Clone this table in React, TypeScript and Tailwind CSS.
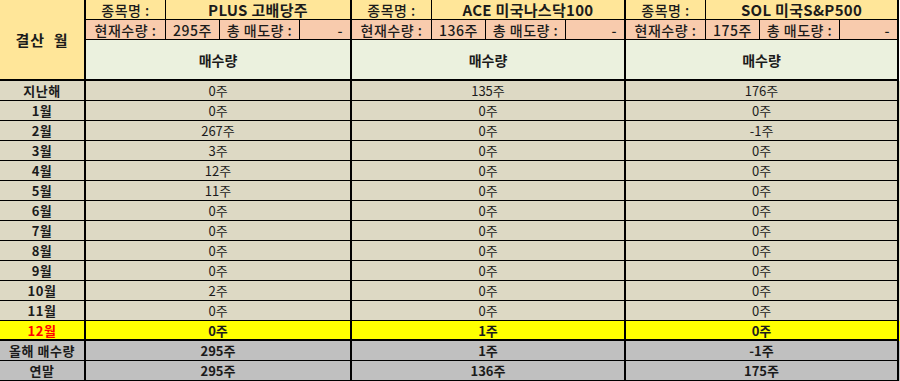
import React from "react"

type Stock = { name: string; qty: string; sold: string }

const stocks: Stock[] = [
  { name: "PLUS 고배당주", qty: "295주", sold: "-" },
  { name: "ACE 미국나스닥100", qty: "136주", sold: "-" },
  { name: "SOL 미국S&P500", qty: "175주", sold: "-" },
]

const blockW = ["w-[266px]", "w-[274px]", "w-[273px]"]

type Row = { label: string; values: number[]; kind?: "current" | "total" }

const rows: Row[] = [
  { label: "지난해", values: [0, 135, 176] },
  { label: "1월", values: [0, 0, 0] },
  { label: "2월", values: [267, 0, -1] },
  { label: "3월", values: [3, 0, 0] },
  { label: "4월", values: [12, 0, 0] },
  { label: "5월", values: [11, 0, 0] },
  { label: "6월", values: [0, 0, 0] },
  { label: "7월", values: [0, 0, 0] },
  { label: "8월", values: [0, 0, 0] },
  { label: "9월", values: [0, 0, 0] },
  { label: "10월", values: [2, 0, 0] },
  { label: "11월", values: [0, 0, 0] },
  { label: "12월", values: [0, 1, 0], kind: "current" },
  { label: "올해 매수량", values: [295, 1, -1], kind: "total" },
  { label: "연말", values: [295, 136, 175], kind: "total" },
]

function DataRow({ row, last }: { row: Row; last: boolean }) {
  const bg =
    row.kind === "current" ? "bg-[#ffff00]" : row.kind === "total" ? "bg-[#c0c0c0]" : "bg-[#ddd9c4]"
  const thick = row.kind === "current" || last
  const border = thick ? "border-b-2" : "border-b"
  const h = last ? "h-[21px]" : "h-[20px]"
  const weight = row.kind ? "font-bold" : "font-normal"
  return (
    <div className={`flex ${h} ${bg}`}>
      <div
        className={`w-[86px] flex items-center justify-center border-r-2 border-black ${border} font-bold text-[13px] tracking-[0.5px] ${
          row.kind === "current" ? "text-[#ff0000]" : "text-[#1b1b1b]"
        }`}
      >
        {row.label}
      </div>
      {row.values.map((v, i) => (
        <div
          key={i}
          className={`${blockW[i]} flex items-center justify-center border-r-2 border-black ${border} ${weight} text-[13px] text-[#1b1b1b]`}
        >
          {v}주
        </div>
      ))}
    </div>
  )
}

export default function App() {
  return (
    <div className="w-[900px] h-[381px] bg-white font-['Noto_Sans_CJK_KR',sans-serif] leading-none">
      <div className="flex">
        <div className="w-[86px] h-[81px] flex items-center justify-center bg-[#ffe699] border-r-2 border-b-2 border-black text-[15px] font-bold text-[#1b1b1b] tracking-[1px]">
          결산&nbsp; 월
        </div>
        {stocks.map((s, i) => (
          <div key={s.name} className={`${blockW[i]} flex flex-col border-r-2 border-black`}>
            <div className="flex h-[20px] bg-[#ffe699] border-b border-black">
              <div className="w-[80px] flex items-center justify-center border-r border-black text-[14px] font-medium tracking-[0.5px] text-[#1b1b1b]">
                종목명 :
              </div>
              <div className="flex-1 flex items-center justify-center text-[15px] font-bold tracking-[0.3px] text-[#1b1b1b]">
                {s.name}
              </div>
            </div>
            <div className="flex h-[20px] bg-[#f8cbad] border-b border-black text-[14px] font-medium tracking-[0.5px] text-[#1b1b1b]">
              <div className="w-[80px] flex items-center justify-center border-r border-black">현재수량 :</div>
              <div className="w-[54px] flex items-center justify-center border-r border-black">{s.qty}</div>
              <div className="w-[80px] flex items-center justify-center border-r border-black">총 매도량 :</div>
              <div className="flex-1 flex items-center justify-end pr-[7px]">{s.sold}</div>
            </div>
            <div className="h-[41px] flex items-center justify-center bg-[#ebf1de] border-b-2 border-black text-[14px] font-bold text-[#1b1b1b]">
              매수량
            </div>
          </div>
        ))}
      </div>
      {rows.map((r, i) => (
        <DataRow key={r.label} row={r} last={i === rows.length - 1} />
      ))}
    </div>
  )
}
